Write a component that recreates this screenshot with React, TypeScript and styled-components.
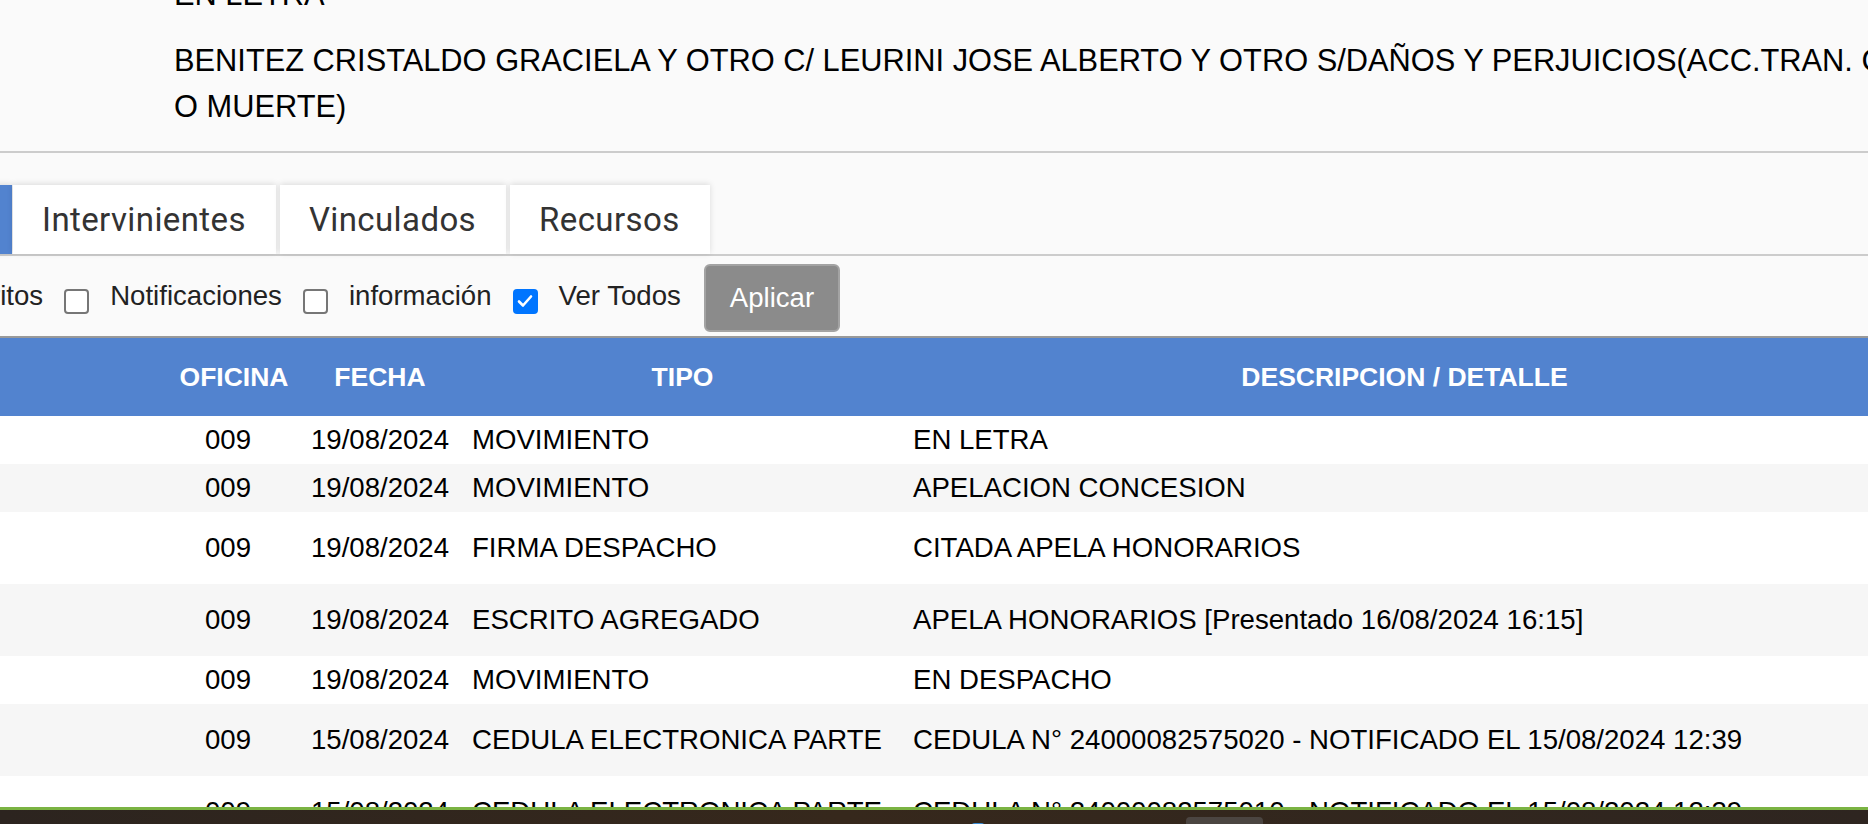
import React from "react";
import styled, { createGlobalStyle } from "styled-components";

const GlobalStyle = createGlobalStyle`
  html, body {
    margin: 0;
    padding: 0;
    overflow: hidden;
    background: #fafafa;
  }
  body {
    font-family: "Liberation Sans", Arial, sans-serif;
    font-size: 27.6px;
    color: #000;
  }
  * { box-sizing: border-box; }
`;

const Screen = styled.div`
  width: 1868px;
  height: 824px;
  display: flex;
  flex-direction: column;
  overflow: hidden;
`;

const Main = styled.main`
  flex: 1;
  min-height: 0;
  overflow: hidden;
  display: block;
`;

const CaseHeader = styled.section`
  margin-top: -28px;
  padding: 0 0 21px 174px;
  border-bottom: 2px solid #cccccc;
  display: flex;
  flex-direction: column;
  gap: 20px;
`;

const CaseLine = styled.p`
  margin: 0;
  width: 1800px;
  font-size: 30.8px;
  line-height: 46px;
  color: #000;
`;

const TabBar = styled.nav`
  height: 103px;
  padding-top: 32px;
  border-bottom: 2px solid #cccccc;
  display: flex;
  gap: 4px;
`;

const Tab = styled.button<{ $active?: boolean }>`
  flex-shrink: 0;
  height: 69px;
  padding: 0 30px 0 29px;
  border: none;
  margin: 0;
  background: ${(p) => (p.$active ? "#5283cf" : "#ffffff")};
  color: ${(p) => (p.$active ? "transparent" : "#333333")};
  font-family: Roboto, "Liberation Sans", sans-serif;
  font-size: 33px;
  letter-spacing: 0.4px;
  white-space: nowrap;
  box-shadow: 0 -1px 6px rgba(0, 0, 0, 0.13);
  cursor: pointer;
  ${(p) =>
    p.$active
      ? `width: 200px; margin-left: -188px; margin-right: -3px; overflow: hidden;`
      : ""}
`;

const FilterRow = styled.div`
  height: 82px;
  margin-left: -101px;
  border-bottom: 2px solid #999999;
  display: flex;
  align-items: center;
  gap: 21px;
`;

const CheckBox = styled.span<{ $checked?: boolean }>`
  flex-shrink: 0;
  width: 25px;
  height: 25px;
  margin-top: 10px;
  border-radius: 4px;
  border: ${(p) => (p.$checked ? "none" : "2px solid #767676")};
  background: ${(p) => (p.$checked ? "#0075ff" : "#ffffff")};
  display: inline-flex;
  align-items: center;
  justify-content: center;
`;

const FilterLabel = styled.span`
  flex-shrink: 0;
  white-space: nowrap;
  color: #222222;
  font-size: 27.6px;
`;

const ApplyButton = styled.button`
  flex-shrink: 0;
  height: 68px;
  margin: 4px 0 0 2px;
  padding: 0 24px;
  background: #8b8b8b;
  border: 2px solid #a3a3a3;
  border-radius: 6px;
  color: #ffffff;
  font-family: "Liberation Sans", Arial, sans-serif;
  font-size: 27.6px;
  cursor: pointer;
`;

const Table = styled.div`
  width: 1906px;
`;

const columns = "170px 128px 164px 441px 1003px";

const HeaderRow = styled.div`
  display: grid;
  grid-template-columns: ${columns};
  height: 78px;
  align-items: center;
  background: #5283cf;
`;

const HeadCell = styled.div`
  color: #ffffff;
  font-weight: bold;
  font-size: 26.5px;
  text-align: center;
  white-space: nowrap;
`;

const Row = styled.div<{ $tall?: boolean; $alt?: boolean }>`
  display: grid;
  grid-template-columns: ${columns};
  height: ${(p) => (p.$tall ? 72 : 48)}px;
  align-items: center;
  background: ${(p) => (p.$alt ? "#f6f6f6" : "#ffffff")};
`;

const Cell = styled.div<{ $align?: "center" | "left"; $pl?: number; $pr?: number }>`
  text-align: ${(p) => p.$align ?? "left"};
  padding-left: ${(p) => p.$pl ?? 0}px;
  padding-right: ${(p) => p.$pr ?? 0}px;
  white-space: nowrap;
  color: #000;
`;

const Taskbar = styled.footer`
  flex-shrink: 0;
  height: 17px;
  border-top: 3px solid #7ab342;
  background: linear-gradient(90deg, #2c241f 0%, #36281c 45%, #2e2520 100%);
  display: flex;
  align-items: flex-start;
  padding-left: 971px;
  gap: 201px;
  overflow: hidden;
`;

const TaskItem = styled.div<{ $w: number; $top: number; $color: string }>`
  flex-shrink: 0;
  width: ${(p) => p.$w}px;
  height: 12px;
  margin-top: ${(p) => p.$top}px;
  border-radius: 4px 4px 0 0;
  background: ${(p) => p.$color};
`;

type Entry = { fecha: string; tipo: string; desc: string; tall?: boolean };

const entries: Entry[] = [
  { fecha: "19/08/2024", tipo: "MOVIMIENTO", desc: "EN LETRA" },
  { fecha: "19/08/2024", tipo: "MOVIMIENTO", desc: "APELACION CONCESION" },
  { fecha: "19/08/2024", tipo: "FIRMA DESPACHO", desc: "CITADA APELA HONORARIOS", tall: true },
  {
    fecha: "19/08/2024",
    tipo: "ESCRITO AGREGADO",
    desc: "APELA HONORARIOS [Presentado 16/08/2024 16:15]",
    tall: true,
  },
  { fecha: "19/08/2024", tipo: "MOVIMIENTO", desc: "EN DESPACHO" },
  {
    fecha: "15/08/2024",
    tipo: "CEDULA ELECTRONICA PARTE",
    desc: "CEDULA N° 24000082575020 - NOTIFICADO EL 15/08/2024 12:39",
    tall: true,
  },
  {
    fecha: "15/08/2024",
    tipo: "CEDULA ELECTRONICA PARTE",
    desc: "CEDULA N° 24000082575010 - NOTIFICADO EL 15/08/2024 12:39",
    tall: true,
  },
];

const Check = () => (
  <svg width="16" height="14" viewBox="0 0 16 14" aria-hidden="true">
    <path d="M2 7.5 L6 11.5 L14 2.5" fill="none" stroke="#ffffff" strokeWidth="2.6" strokeLinecap="round" strokeLinejoin="round" />
  </svg>
);

const Filter = ({ label, checked }: { label: string; checked?: boolean }) => (
  <>
    <CheckBox role="checkbox" aria-checked={!!checked} $checked={checked}>
      {checked && <Check />}
    </CheckBox>
    <FilterLabel>{label}</FilterLabel>
  </>
);

export default function App() {
  return (
    <>
      <GlobalStyle />
      <Screen>
        <Main>
          <CaseHeader>
            <CaseLine>EN LETRA</CaseLine>
            <CaseLine>
              BENITEZ CRISTALDO GRACIELA Y OTRO C/ LEURINI JOSE ALBERTO Y OTRO S/DAÑOS Y
              PERJUICIOS(ACC.TRAN. C/LES. O MUERTE)
            </CaseLine>
          </CaseHeader>

          <TabBar>
            <Tab $active>Movimientos</Tab>
            <Tab>Intervinientes</Tab>
            <Tab>Vinculados</Tab>
            <Tab>Recursos</Tab>
          </TabBar>

          <FilterRow>
            <Filter label="Escritos" />
            <Filter label="Notificaciones" />
            <Filter label="información" />
            <Filter label="Ver Todos" checked />
            <ApplyButton>Aplicar</ApplyButton>
          </FilterRow>

          <Table>
            <HeaderRow>
              <HeadCell />
              <HeadCell>OFICINA</HeadCell>
              <HeadCell>FECHA</HeadCell>
              <HeadCell>TIPO</HeadCell>
              <HeadCell>DESCRIPCION / DETALLE</HeadCell>
            </HeaderRow>
            {entries.map((e, i) => (
              <Row key={i} $tall={e.tall} $alt={i % 2 === 1}>
                <Cell />
                <Cell $align="center" $pr={12}>
                  009
                </Cell>
                <Cell $align="center">{e.fecha}</Cell>
                <Cell $pl={10}>{e.tipo}</Cell>
                <Cell $pl={10}>{e.desc}</Cell>
              </Row>
            ))}
          </Table>
        </Main>
        <Taskbar>
          <TaskItem $w={14} $top={13} $color="#3b8ed8" />
          <TaskItem $w={77} $top={7} $color="#4b4541" />
        </Taskbar>
      </Screen>
    </>
  );
}
